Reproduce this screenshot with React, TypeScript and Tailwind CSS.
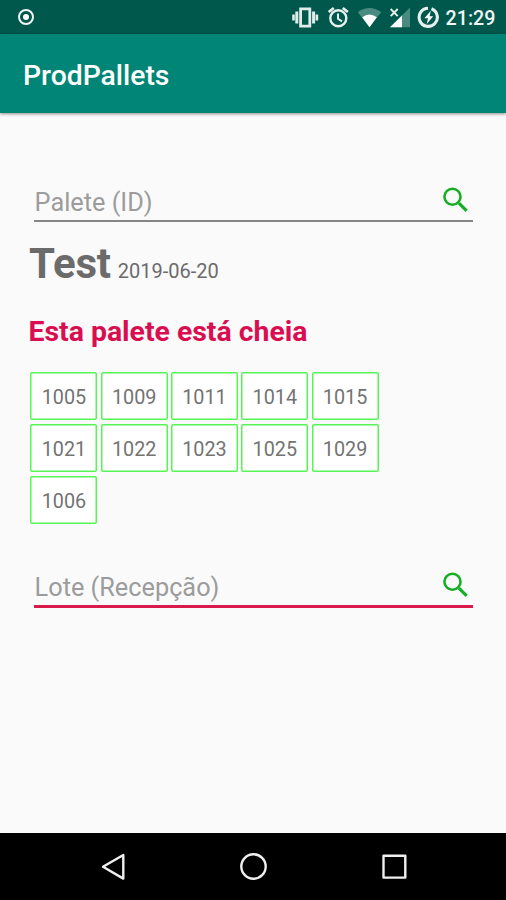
import type { ReactNode } from "react";

const rows = [
  ["1005", "1009", "1011", "1014", "1015"],
  ["1021", "1022", "1023", "1025", "1029"],
  ["1006"],
];

function StatusIcons() {
  return (
    <>
      <svg className="ml-[291px] h-[34px] w-7 shrink-0" viewBox="0 0 28 34" fill="#dfecea">
        <path d="M8.2 7.5h12v20h-12zM11 10.3v14.4h6.4V10.3z" fillRule="evenodd" />
        <path d="M4.3 11.5h3v12h-3zM1.2 14.5h2.6v6H1.2zM21.1 11.5h3v12h-3zM24.6 14.5h2.6v6h-2.6z" />
      </svg>
      <svg className="ml-2 h-[34px] w-6 shrink-0" viewBox="0 0 24 34" fill="none" stroke="#e6f0ee">
        <circle cx="11.3" cy="18.3" r="8" strokeWidth="2.4" />
        <path d="M1.7 12 6.8 7.9M20.9 12 15.8 7.9" strokeWidth="2.6" />
        <path d="M11 13.5v5.3l4 2.6" strokeWidth="2" />
      </svg>
      <svg className="ml-[6px] h-[34px] w-6 shrink-0" viewBox="0 0 24 34">
        <path d="M12.5 27.3 .8 12.2Q12.5 3.8 24.2 12.2Z" fill="#4b8a80" />
        <path d="M12.5 27.3 5.2 17.2Q12.5 12 19.8 17.2Z" fill="#fff" />
      </svg>
      <svg className="ml-[8px] h-[34px] w-6 shrink-0" viewBox="0 0 24 34">
        <path d="M1 27.3 21 7.5V27.3Z" fill="#4b8a80" />
        <path d="M1 27.3 13 15.4V27.3Z" fill="#fff" />
        <path d="m1.7 9 7 7.2M8.7 9l-7 7.2" stroke="#e6f0ee" strokeWidth="1.9" />
      </svg>
      <svg className="ml-[4px] h-[34px] w-6 shrink-0" viewBox="0 0 24 34">
        <path d="M11 8.2A9.1 9.1 0 1 0 14.5 8.8" fill="none" stroke="#e6f0ee" strokeWidth="3.1" />
        <path d="M13.8 10.7 7.5 18.3H11L9.7 24 16.2 16.3H12.6Z" fill="#fff" />
      </svg>
    </>
  );
}

function SearchIcon() {
  return (
    <svg className="h-[33.7px] w-[33.7px] shrink-0" viewBox="0 0 24 24" fill="none" stroke="#14ae22">
      <circle cx="9.6" cy="9.8" r="5.75" strokeWidth="1.8" />
      <path d="m14.2 14.4 5.5 5.5" strokeWidth="2.2" />
    </svg>
  );
}

function Field({ label, children }: { label: string; children: ReactNode }) {
  return (
    <div className="ml-[34px] w-[439px]">
      <div className="flex h-[37px] items-start justify-between">
        <span className="pl-[0.6px] pt-[5px] text-[25.3px] leading-[30px] text-[#9c9c9c]">{label}</span>
        <SearchIcon />
      </div>
      {children}
    </div>
  );
}

export default function App() {
  return (
    <div className="flex h-[900px] w-[506px] flex-col overflow-hidden bg-[#fafafa] font-['Roboto',sans-serif]">
      <div className="flex h-[34px] shrink-0 items-center bg-[#00574b]">
        <div className="ml-[18px] flex h-4 w-4 items-center justify-center rounded-full border-2 border-[#f0f6f5]">
          <div className="h-[6px] w-[6px] rounded-full bg-white" />
        </div>
        <div className="-ml-[34px] flex items-center">
          <StatusIcons />
        </div>
        <span className="ml-[4.5px] pt-[3px] text-[19.7px] font-medium leading-[31px] text-[#f0f6f5]">21:29</span>
      </div>
      <header className="z-10 flex h-[78.5px] shrink-0 items-center bg-[#008577] pl-[23px] shadow-[0_1px_3px_rgba(0,0,0,0.45)]">
        <h1 className="pt-[5px] text-[28.3px] font-medium leading-8 text-white">ProdPallets</h1>
      </header>
      <main className="flex flex-1 flex-col pt-[70.5px]">
        <Field label="Palete (ID)">
          <div className="h-[1.5px] bg-[#858585]" />
        </Field>
        <div className="ml-[29px] mt-[17px] flex h-[50px] items-baseline gap-[7px] text-[#6b6b6b]">
          <span className="text-[42px] font-bold leading-[50px] tracking-[-0.2px]">Test</span>
          <span className="text-[20px]">2019-06-20</span>
        </div>
        <p className="ml-[28.5px] mt-[27.5px] text-[28.4px] font-bold leading-8 text-[#d90d50]">Esta palete está cheia</p>
        <div className="ml-[30.4px] mt-[24px] flex flex-col gap-[4px]">
          {rows.map((row) => (
            <div key={row[0]} className="flex gap-[3.3px]">
              {row.map((n) => (
                <div
                  key={n}
                  className="flex h-[48px] w-[67px] items-center justify-center rounded-[2px] bg-white pt-[3px] text-[19.8px] text-[#737373] shadow-[inset_0_0_0_1.5px_#55f555]"
                >
                  {n}
                </div>
              ))}
            </div>
          ))}
        </div>
        <div className="mt-[44px]">
          <Field label="Lote (Recepção)">
            <div className="h-[2.8px] bg-[#d81b4a]" />
          </Field>
        </div>
      </main>
      <nav className="h-[67px] shrink-0 bg-black">
        <svg className="h-[67px] w-[506px]" viewBox="0 0 506 67" fill="none" stroke="#f0f0f0" strokeWidth="2.4" strokeLinejoin="round">
          <path d="M103 33.8 123.3 22V45.6Z" />
          <circle cx="253.5" cy="33.5" r="12.2" />
          <rect x="383.5" y="22.8" width="21.8" height="21.8" />
        </svg>
      </nav>
    </div>
  );
}
